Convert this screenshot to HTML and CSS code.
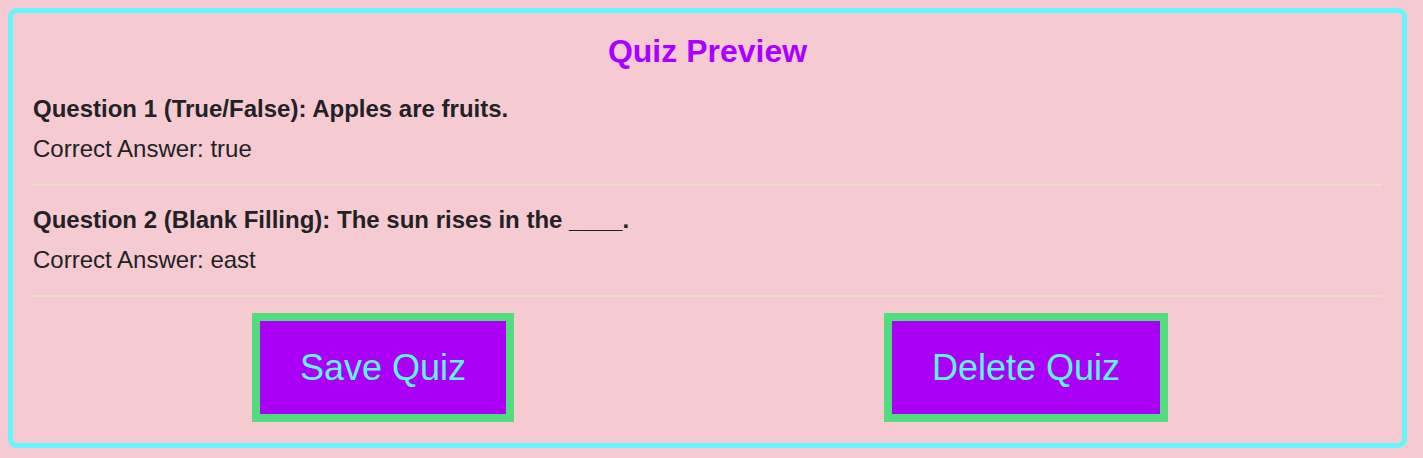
FILE: index.html
```html
<!DOCTYPE html>
<html lang="en">
<head>
<meta charset="utf-8">
<title>Quiz Preview</title>
<link rel="stylesheet" href="styles.css">
</head>
<body>
<div class="quiz-box">
  <h2 class="quiz-title">Quiz Preview</h2>
  <div class="question">
    <p class="question-text">Question 1 (True/False): Apples are fruits.</p>
    <p class="answer">Correct Answer: true</p>
  </div>
  <div class="question">
    <p class="question-text">Question 2 (Blank Filling): The sun rises in the ____.</p>
    <p class="answer">Correct Answer: east</p>
  </div>
  <div class="actions">
    <button class="btn">Save Quiz</button>
    <button class="btn">Delete Quiz</button>
  </div>
</div>
</body>
</html>
```

FILE: styles.css
```css
html, body {
  background: #f5cbd1;
}
body {
  margin: 8px;
  font-family: "Liberation Sans", Arial, Helvetica, sans-serif;
  color: #222226;
}
.quiz-box {
  box-sizing: border-box;
  width: 1399px;
  height: 440px;
  border: 5px solid #63f7fd;
  border-radius: 9px;
  padding: 20px;
}
.quiz-title {
  margin: 0 0 5px;
  font-size: 32px;
  line-height: 37px;
  font-weight: bold;
  color: #aa00ff;
  text-align: center;
}
.question {
  padding: 20px 0 21px;
  border-bottom: 2px solid #f3dcc4;
}
.question p {
  margin: 0;
  font-size: 24px;
  line-height: 28px;
}
.question-text {
  font-weight: bold;
  margin-bottom: 12px !important;
}
.actions {
  display: flex;
  justify-content: center;
  gap: 370px;
  margin-top: 16px;
  padding-left: 5px;
}
.btn {
  box-sizing: border-box;
  height: 109px;
  padding: 0 40px;
  background: #aa00f6;
  border: 8px solid #51dc7e;
  border-radius: 0;
  color: #5ff5fd;
  font-family: "Liberation Sans", Arial, Helvetica, sans-serif;
  font-size: 36px;
  line-height: 41px;
}
```
